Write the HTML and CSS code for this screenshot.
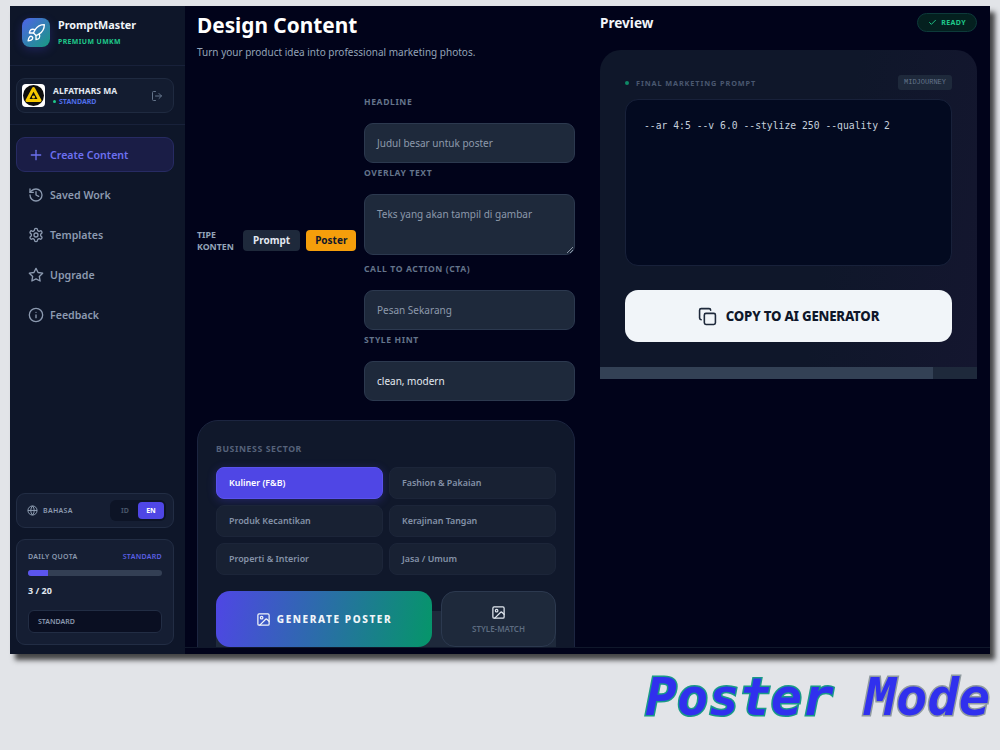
FILE: index.html
```html
<!DOCTYPE html>
<html lang="en">
<head>
  <meta charset="UTF-8">
  <title>PromptMaster - Poster Mode</title>
  <link rel="stylesheet" href="styles.css">
</head>
<body>
  <div class="window">
    <aside class="sidebar">
      <div class="brand">
        <div class="brand-logo">
          <svg width="20" height="20" viewBox="0 0 24 24" fill="none" stroke="#fff" stroke-width="1.6" stroke-linecap="round" stroke-linejoin="round"><path d="M4.5 16.5c-1.5 1.26-2 5-2 5s3.74-.5 5-2c.71-.84.7-2.13-.09-2.91a2.18 2.18 0 0 0-2.91-.09z"/><path d="m12 15-3-3a22 22 0 0 1 2-3.95A12.88 12.88 0 0 1 22 2c0 2.72-.78 7.5-6 11a22.35 22.35 0 0 1-4 2z"/><path d="M9 12H4s.55-3.03 2-4c1.62-1.08 5 0 5 0"/><path d="M12 15v5s3.03-.55 4-2c1.08-1.62 0-5 0-5"/></svg>
        </div>
        <div>
          <div class="brand-name">PromptMaster</div>
          <div class="brand-tag">PREMIUM UMKM</div>
        </div>
      </div>

      <div class="user-wrap">
        <div class="user-card">
          <div class="avatar">
            <svg width="21" height="21" viewBox="0 0 21 21"><circle cx="10.5" cy="10.5" r="10.5" fill="#0c0c0c"/><path d="M10.5 3.5 17 15.5H4z" fill="none" stroke="#f5c800" stroke-width="3" stroke-linejoin="round"/><circle cx="10.5" cy="12" r="1.6" fill="#f5c800"/></svg>
          </div>
          <div class="user-info">
            <div class="user-name">ALFATHARS MA</div>
            <div class="user-plan"><span class="dot"></span>STANDARD</div>
          </div>
          <svg class="logout" width="12" height="12" viewBox="0 0 24 24" fill="none" stroke="#64748b" stroke-width="2" stroke-linecap="round" stroke-linejoin="round"><path d="M9 21H5a2 2 0 0 1-2-2V5a2 2 0 0 1 2-2h4"/><path d="m16 17 5-5-5-5"/><path d="M21 12H9"/></svg>
        </div>
      </div>

      <nav class="nav">
        <a class="nav-item active">
          <svg width="16" height="16" viewBox="0 0 24 24" fill="none" stroke="currentColor" stroke-width="2" stroke-linecap="round"><path d="M5 12h14"/><path d="M12 5v14"/></svg>
          Create Content
        </a>
        <a class="nav-item">
          <svg width="16" height="16" viewBox="0 0 24 24" fill="none" stroke="currentColor" stroke-width="2" stroke-linecap="round" stroke-linejoin="round"><path d="M3 12a9 9 0 1 0 9-9 9.75 9.75 0 0 0-6.74 2.74L3 8"/><path d="M3 3v5h5"/><path d="M12 7v5l4 2"/></svg>
          Saved Work
        </a>
        <a class="nav-item">
          <svg width="16" height="16" viewBox="0 0 24 24" fill="none" stroke="currentColor" stroke-width="2" stroke-linecap="round" stroke-linejoin="round"><path d="M12.22 2h-.44a2 2 0 0 0-2 2v.18a2 2 0 0 1-1 1.73l-.43.25a2 2 0 0 1-2 0l-.15-.08a2 2 0 0 0-2.73.73l-.22.38a2 2 0 0 0 .73 2.73l.15.1a2 2 0 0 1 1 1.72v.51a2 2 0 0 1-1 1.74l-.15.09a2 2 0 0 0-.73 2.73l.22.38a2 2 0 0 0 2.73.73l.15-.08a2 2 0 0 1 2 0l.43.25a2 2 0 0 1 1 1.73V20a2 2 0 0 0 2 2h.44a2 2 0 0 0 2-2v-.18a2 2 0 0 1 1-1.73l.43-.25a2 2 0 0 1 2 0l.15.08a2 2 0 0 0 2.73-.73l.22-.39a2 2 0 0 0-.73-2.73l-.15-.08a2 2 0 0 1-1-1.74v-.5a2 2 0 0 1 1-1.74l.15-.09a2 2 0 0 0 .73-2.73l-.22-.38a2 2 0 0 0-2.73-.73l-.15.08a2 2 0 0 1-2 0l-.43-.25a2 2 0 0 1-1-1.73V4a2 2 0 0 0-2-2z"/><circle cx="12" cy="12" r="3"/></svg>
          Templates
        </a>
        <a class="nav-item">
          <svg width="16" height="16" viewBox="0 0 24 24" fill="none" stroke="currentColor" stroke-width="2" stroke-linecap="round" stroke-linejoin="round"><path d="M12 2l3.09 6.26L22 9.27l-5 4.87 1.18 6.88L12 17.77l-6.18 3.25L7 14.14 2 9.27l6.91-1.01z"/></svg>
          Upgrade
        </a>
        <a class="nav-item">
          <svg width="16" height="16" viewBox="0 0 24 24" fill="none" stroke="currentColor" stroke-width="2" stroke-linecap="round"><circle cx="12" cy="12" r="10"/><path d="M12 16v-4"/><path d="M12 8h.01"/></svg>
          Feedback
        </a>
      </nav>

      <div class="side-bottom">
        <div class="lang-card">
          <svg width="11" height="11" viewBox="0 0 24 24" fill="none" stroke="#94a3b8" stroke-width="2"><circle cx="12" cy="12" r="10"/><path d="M2 12h20"/><path d="M12 2a15 15 0 0 1 0 20 15 15 0 0 1 0-20z"/></svg>
          <span class="lang-label">BAHASA</span>
          <div class="lang-switch">
            <span class="lang-opt">ID</span>
            <span class="lang-opt on">EN</span>
          </div>
        </div>
        <div class="quota-card">
          <div class="quota-top">
            <span>DAILY QUOTA</span>
            <span class="quota-plan">STANDARD</span>
          </div>
          <div class="quota-bar"><div class="quota-fill" style="width:15%"></div></div>
          <div class="quota-count">3 / 20</div>
          <div class="quota-select">STANDARD</div>
        </div>
      </div>
    </aside>

    <main class="main">
      <div class="main-scroll">
        <section class="editor">
          <h1 class="title">Design Content</h1>
          <p class="subtitle">Turn your product idea into professional marketing photos.</p>

          <div class="form-row">
            <div class="type-row">
              <span class="type-label">TIPE KONTEN</span>
              <span class="type-btn">Prompt</span>
              <span class="type-btn selected">Poster</span>
            </div>
            <div class="fields">
              <label class="field-label">HEADLINE</label>
              <div class="input">Judul besar untuk poster</div>
              <label class="field-label">OVERLAY TEXT</label>
              <div class="input textarea">Teks yang akan tampil di gambar
                <svg class="grip" width="6" height="6" viewBox="0 0 6 6" stroke="#8a94a6" stroke-width="1"><path d="M6 0 0 6"/><path d="M6 3 3 6"/></svg>
              </div>
              <label class="field-label">CALL TO ACTION (CTA)</label>
              <div class="input">Pesan Sekarang</div>
              <label class="field-label">STYLE HINT</label>
              <div class="input filled">clean, modern</div>
            </div>
          </div>

          <div class="sector-card">
            <div class="sector-title">BUSINESS SECTOR</div>
            <div class="sector-grid">
              <div class="sector active">Kuliner (F&amp;B)</div>
              <div class="sector">Fashion &amp; Pakaian</div>
              <div class="sector">Produk Kecantikan</div>
              <div class="sector">Kerajinan Tangan</div>
              <div class="sector">Properti &amp; Interior</div>
              <div class="sector">Jasa / Umum</div>
            </div>
            <div class="actions">
              <div class="generate">
                <svg width="15" height="15" viewBox="0 0 24 24" fill="none" stroke="currentColor" stroke-width="2" stroke-linecap="round" stroke-linejoin="round"><rect x="3" y="3" width="18" height="18" rx="2"/><circle cx="9" cy="9" r="2"/><path d="m21 15-3.09-3.09a2 2 0 0 0-2.82 0L6 21"/></svg>
                GENERATE POSTER
              </div>
              <div class="style-match">
                <svg width="15" height="15" viewBox="0 0 24 24" fill="none" stroke="#e2e8f0" stroke-width="2" stroke-linecap="round" stroke-linejoin="round"><rect x="3" y="3" width="18" height="18" rx="2"/><circle cx="9" cy="9" r="2"/><path d="m21 15-3.09-3.09a2 2 0 0 0-2.82 0L6 21"/></svg>
                STYLE-MATCH
              </div>
            </div>
          </div>
        </section>

        <section class="preview">
          <div class="preview-head">
            <h2 class="preview-title">Preview</h2>
            <div class="ready">
              <svg width="9" height="9" viewBox="0 0 24 24" fill="none" stroke="currentColor" stroke-width="2.5" stroke-linecap="round" stroke-linejoin="round"><path d="M20 6 9 17l-5-5"/></svg>
              READY
            </div>
          </div>
          <div class="preview-card">
            <div class="prompt-head">
              <span class="dot green"></span>
              <span class="prompt-label">FINAL MARKETING PROMPT</span>
              <span class="engine">MIDJOURNEY</span>
            </div>
            <div class="prompt-box">--ar 4:5 --v 6.0 --stylize 250 --quality 2</div>
            <div class="copy-btn">
              <svg width="19" height="19" viewBox="0 0 24 24" fill="none" stroke="#1e293b" stroke-width="2" stroke-linecap="round" stroke-linejoin="round"><rect x="8" y="8" width="14" height="14" rx="2"/><path d="M4 16c-1.1 0-2-.9-2-2V4c0-1.1.9-2 2-2h10c1.1 0 2 .9 2 2"/></svg>
              COPY TO AI GENERATOR
            </div>
          </div>
          <div class="scrollbar"><div class="scroll-thumb"></div></div>
        </section>
      </div>
      <div class="main-foot"></div>
    </main>
  </div>
  <div class="caption"><span class="caption-a">Poster</span> <span class="caption-b">Mode</span></div>
</body>
</html>
```

FILE: styles.css
```css
* {
  box-sizing: border-box;
}

html, body {
  height: 100%;
}

body {
  margin: 0;
  padding: 6px 10px 0;
  background: #e2e4e8;
  font-family: "Noto Sans", "Open Sans", sans-serif;
  overflow: hidden;
}

.window {
  display: flex;
  height: 648px;
  background: #01031a;
  box-shadow: 5px 6px 5px rgba(30, 30, 30, 0.8);
  overflow: hidden;
}

/* sidebar */
.sidebar {
  display: flex;
  flex-direction: column;
  width: 175px;
  flex-shrink: 0;
  background: #0e1629;
}

.brand {
  display: flex;
  gap: 8px;
  height: 60px;
  padding: 12px 12px 0;
  border-bottom: 1px solid #18213a;
}

.brand-logo {
  display: flex;
  align-items: center;
  justify-content: center;
  width: 28px;
  height: 29px;
  border-radius: 8px;
  background: linear-gradient(135deg, #4f63e8, #179a80);
  box-shadow: 0 3px 10px rgba(79, 70, 229, 0.25);
}

.brand-name {
  margin-top: -1px;
  color: #f1f5f9;
  font-size: 10.8px;
  font-weight: 700;
  line-height: 15px;
}

.brand-tag {
  margin-top: 5px;
  color: #1fc98b;
  font-size: 6.9px;
  font-weight: 700;
  line-height: 10px;
  letter-spacing: 0.4px;
}

.user-wrap {
  padding: 12px 11px 11px 6px;
  border-bottom: 1px solid #18213a;
}

.user-card {
  display: flex;
  align-items: center;
  gap: 8px;
  height: 35px;
  padding: 0 10px 0 5px;
  border: 1px solid #1f2a40;
  border-radius: 9px;
  background: #131c30;
}

.avatar {
  display: flex;
  align-items: center;
  justify-content: center;
  width: 23px;
  height: 23px;
  border-radius: 4px;
  background: #fff;
}

.user-info {
  flex: 1;
}

.user-name {
  color: #e2e8f0;
  font-size: 8.5px;
  font-weight: 700;
  line-height: 12px;
}

.user-plan {
  display: flex;
  align-items: center;
  gap: 3px;
  color: #4f6ee8;
  font-size: 7px;
  font-weight: 700;
  line-height: 9px;
}

.dot {
  width: 3px;
  height: 3px;
  border-radius: 50%;
  background: #1fc98b;
}

.nav {
  display: flex;
  flex-direction: column;
  gap: 5px;
  padding: 12px 11px 0 6px;
}

.nav-item {
  display: flex;
  align-items: center;
  gap: 6px;
  height: 35px;
  padding: 0 11px;
  color: #8c9ab0;
  font-size: 10.6px;
  font-weight: 600;
  border: 1px solid transparent;
}

.nav-item.active {
  color: #6c70f0;
  background: #1a1d46;
  border-color: #272b63;
  border-radius: 9px;
}

.side-bottom {
  display: flex;
  flex-direction: column;
  gap: 11px;
  margin-top: auto;
  padding: 0 11px 9px 6px;
}

.lang-card {
  display: flex;
  align-items: center;
  gap: 5px;
  height: 35px;
  padding: 0 7px 0 10px;
  border: 1px solid #222d44;
  border-radius: 9px;
  background: #151e33;
}

.lang-label {
  flex: 1;
  color: #8c9ab0;
  font-size: 7px;
  font-weight: 600;
  letter-spacing: 0.3px;
}

.lang-switch {
  display: flex;
  padding: 2px;
  border-radius: 6px;
  background: #0d1426;
}

.lang-opt {
  width: 26px;
  height: 17px;
  color: #475569;
  font-size: 7px;
  font-weight: 700;
  line-height: 17px;
  text-align: center;
}

.lang-opt.on {
  color: #fff;
  background: #4f46e5;
  border-radius: 4px;
}

.quota-card {
  padding: 12px 11px 11px;
  border: 1px solid #222d44;
  border-radius: 9px;
  background: #151e33;
}

.quota-top {
  display: flex;
  justify-content: space-between;
  color: #8c9ab0;
  font-size: 7px;
  font-weight: 600;
  line-height: 10px;
  letter-spacing: 0.3px;
}

.quota-plan {
  color: #5b60e6;
}

.quota-bar {
  height: 6px;
  margin-top: 8px;
  border-radius: 3px;
  background: #333f54;
  overflow: hidden;
}

.quota-fill {
  height: 100%;
  background: #5b55ee;
}

.quota-count {
  margin-top: 8px;
  color: #e2e8f0;
  font-size: 9px;
  font-weight: 700;
  line-height: 13px;
}

.quota-select {
  height: 23px;
  margin-top: 13px;
  padding-left: 9px;
  border: 1px solid #222d44;
  border-radius: 6px;
  background: #0a0f22;
  color: #8c9ab0;
  font-size: 7px;
  font-weight: 600;
  line-height: 21px;
}

/* main */
.main {
  display: flex;
  flex: 1;
  flex-direction: column;
  min-width: 0;
}

.main-scroll {
  display: flex;
  flex: 1;
  gap: 25px;
  min-height: 0;
  padding: 0 13px 0 12px;
  overflow: hidden;
}

.main-foot {
  height: 7px;
  border-top: 1px solid #10182b;
  background: #01031a;
}

.editor {
  width: 378px;
  flex-shrink: 0;
}

.title {
  margin: 5px 0 0;
  color: #fff;
  font-size: 20.8px;
  font-weight: 700;
  line-height: 28px;
}

.subtitle {
  margin: 6px 0 0;
  color: #94a3b8;
  font-size: 10px;
  line-height: 15px;
}

.form-row {
  display: flex;
  align-items: center;
  margin-top: 36px;
}

.type-row {
  display: flex;
  align-items: center;
  gap: 6px;
  width: 167px;
  margin-bottom: 16px;
  flex-shrink: 0;
}

.type-label {
  width: 40px;
  color: #94a3b8;
  font-size: 8.8px;
  font-weight: 700;
  line-height: 12px;
}

.type-btn {
  padding: 0 10px;
  height: 21px;
  border-radius: 4px;
  background: #1e293b;
  color: #e2e8f0;
  font-size: 10px;
  font-weight: 700;
  line-height: 21px;
}

.type-btn.selected {
  padding: 0 9px;
  background: #f59e0b;
  color: #0f172a;
}

.fields {
  flex: 1;
}

.field-label {
  display: block;
  margin-bottom: 15px;
  color: #64748b;
  font-size: 8.6px;
  font-weight: 700;
  line-height: 12px;
  letter-spacing: 0.6px;
}

.input {
  position: relative;
  height: 40px;
  margin-bottom: 4px;
  padding: 11px 12px;
  border: 1px solid #2c394f;
  border-radius: 9px;
  background: #1e293b;
  color: #8d99ab;
  font-size: 10px;
  line-height: 16px;
}

.input.textarea {
  height: 61px;
  margin-bottom: 8px;
}

.input.filled {
  margin-bottom: 0;
  color: #e2e8f0;
}

.grip {
  position: absolute;
  right: 1px;
  bottom: 1px;
}

.sector-card {
  height: 260px;
  margin-top: 19px;
  padding: 22px 18px 0;
  border: 1px solid #1c2540;
  border-radius: 21px;
  background: #10182b;
}

.sector-title {
  color: #56627a;
  font-size: 8.7px;
  font-weight: 700;
  line-height: 13px;
  letter-spacing: 0.6px;
}

.sector-grid {
  display: grid;
  grid-template-columns: 1fr 1fr;
  gap: 6px;
  margin-top: 11px;
}

.sector {
  height: 32px;
  padding-left: 12px;
  border: 1px solid #1c2539;
  border-radius: 8px;
  background: #182133;
  color: #8492a8;
  font-size: 8.9px;
  font-weight: 600;
  line-height: 30px;
}

.sector.active {
  background: #4f46e5;
  border-color: #5a52ee;
  color: #fff;
  box-shadow: 0 2px 10px rgba(79, 70, 229, 0.3);
}

.actions {
  position: relative;
  display: flex;
  gap: 9px;
  margin-top: 16px;
}

/* next button peeking out from behind the row */
.actions::before {
  content: "";
  position: absolute;
  left: 0;
  right: 0;
  top: 20px;
  height: 50px;
  border-radius: 8px;
  background: #1e293b;
}

.generate {
  position: relative;
  display: flex;
  align-items: center;
  justify-content: center;
  gap: 6px;
  width: 216px;
  height: 56px;
  border-radius: 14px;
  background: linear-gradient(100deg, #4f46e5, #059669);
  color: #f1f5f9;
  font-size: 10px;
  font-weight: 800;
  letter-spacing: 1.6px;
}

.style-match {
  position: relative;
  display: flex;
  flex: 1;
  flex-direction: column;
  align-items: center;
  justify-content: center;
  gap: 3px;
  height: 56px;
  border: 1px solid #2c394f;
  border-radius: 14px;
  background: #1e293b;
  color: #5d6b80;
  font-size: 8px;
  font-weight: 600;
}

/* preview */
.preview {
  flex: 1;
  min-width: 0;
}

.preview-head {
  display: flex;
  align-items: center;
  justify-content: space-between;
  height: 33px;
}

.preview-title {
  margin: 0;
  color: #f1f5f9;
  font-size: 13.6px;
  font-weight: 700;
}

.ready {
  display: flex;
  align-items: center;
  gap: 4px;
  height: 19px;
  padding: 0 10px;
  border: 1px solid #0d3a3a;
  border-radius: 10px;
  background: #04201f;
  color: #1fc98b;
  font-size: 7px;
  font-weight: 700;
  letter-spacing: 0.4px;
}

.preview-card {
  height: 317px;
  margin-top: 11px;
  padding: 25px 25px 0;
  border-radius: 21px 21px 0 0;
  background: linear-gradient(100deg, #0f172a 60%, #14162f);
}

.prompt-head {
  display: flex;
  align-items: center;
  gap: 7px;
  height: 15px;
}

.dot.green {
  width: 4px;
  height: 4px;
  background: #0f8a66;
}

.prompt-label {
  flex: 1;
  color: #4a5870;
  font-size: 7.3px;
  font-weight: 700;
  letter-spacing: 0.9px;
}

.engine {
  padding: 0 6px;
  height: 15px;
  border-radius: 3px;
  background: #1e293b;
  color: #64748b;
  font-family: "Liberation Mono", monospace;
  font-size: 7px;
  line-height: 15px;
}

.prompt-box {
  height: 167px;
  margin-top: 9px;
  padding: 19px 18px;
  border: 1px solid #18213a;
  border-radius: 13px;
  background: #030a20;
  color: #c6d0dc;
  font-family: "DejaVu Sans Mono", monospace;
  font-size: 9.73px;
  line-height: 14px;
}

.copy-btn {
  display: flex;
  align-items: center;
  justify-content: center;
  gap: 9px;
  height: 52px;
  margin-top: 24px;
  border-radius: 13px;
  background: #f1f5f9;
  color: #0f172a;
  font-size: 13.2px;
  font-weight: 800;
  letter-spacing: -0.2px;
}

.scrollbar {
  height: 12px;
  background: #1e293b;
}

.scroll-thumb {
  width: 88.3%;
  height: 100%;
  background: #334155;
}

.caption {
  margin-top: 13px;
  color: #3030ee;
  font-family: "DejaVu Sans Mono", monospace;
  font-size: 52px;
  font-style: italic;
  font-weight: 700;
  line-height: 60px;
  text-align: right;
  white-space: nowrap;
}

.caption-a {
  -webkit-text-stroke: 3px #1a9a88;
  paint-order: stroke fill;
}

.caption-b {
  -webkit-text-stroke: 3px #8f9aa0;
  paint-order: stroke fill;
}
```
